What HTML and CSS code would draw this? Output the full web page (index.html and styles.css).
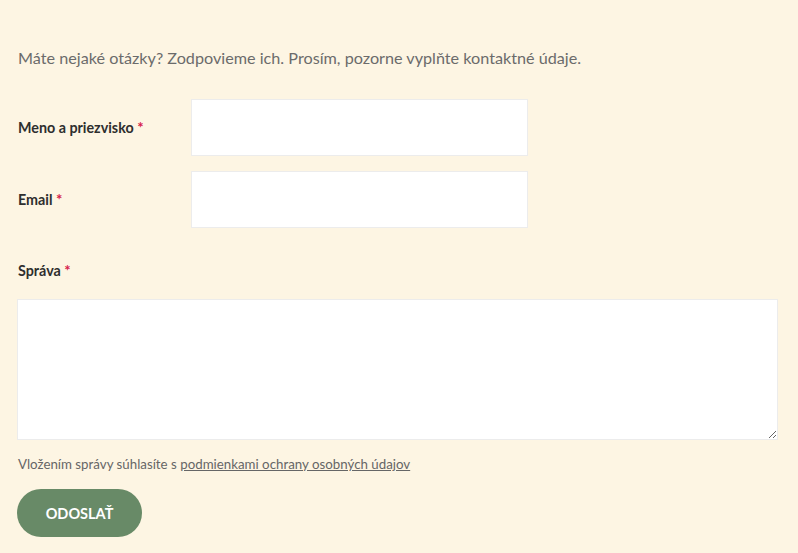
FILE: index.html
```html
<!DOCTYPE html>
<html lang="sk">
<head>
  <meta charset="UTF-8">
  <meta name="viewport" content="width=device-width, initial-scale=1.0">
  <title>Kontakt</title>
  <link rel="stylesheet" href="styles.css">
</head>
<body>
  <form class="contact">
    <p class="intro">Máte nejaké otázky? Zodpovieme ich. Prosím, pozorne vyplňte kontaktné údaje.</p>
    <div class="row">
      <label for="name">Meno a priezvisko <span class="req">*</span></label>
      <input type="text" id="name">
    </div>
    <div class="row">
      <label for="email">Email <span class="req">*</span></label>
      <input type="email" id="email">
    </div>
    <div class="block">
      <label for="msg">Správa <span class="req">*</span></label>
      <textarea id="msg"></textarea>
    </div>
    <p class="consent">Vložením správy súhlasíte s <a href="#">podmienkami ochrany osobných údajov</a></p>
    <button type="submit">ODOSLAŤ</button>
  </form>
</body>
</html>
```

FILE: styles.css
```css
body {
  margin: 0;
  background: #fdf5e3;
  font-family: Lato, sans-serif;
  color: #2b2b2b;
}
.contact {
  padding: 46px 20px 0 17px;
}
.intro {
  margin: 0 0 29px 1px;
  font-size: 16.2px;
  line-height: 24px;
  color: #6b6b6b;
}
.row {
  display: flex;
  align-items: center;
  margin-bottom: 15px;
}
.row label {
  width: 173px;
  padding-left: 1px;
}
label {
  font-size: 14.3px;
  line-height: 20px;
  font-weight: bold;
  color: #2e2e2e;
}
.req {
  color: #d6204a;
  font-size: 15px;
}
input {
  width: 337px;
  height: 57px;
  box-sizing: border-box;
  border: 1px solid #ececec;
  background: #fff;
}
.block label {
  display: block;
  margin: 32px 0 18px 1px;
}
textarea {
  display: block;
  width: 761px;
  height: 141px;
  box-sizing: border-box;
  border: 1px solid #ececec;
  background: #fff;
}
.consent {
  margin: 14px 0 15px 1px;
  font-size: 13.3px;
  line-height: 20px;
  color: #666;
}
.consent a {
  color: #666;
}
button {
  width: 125px;
  height: 48px;
  border: none;
  border-radius: 24px;
  background: #688a67;
  color: #fff;
  font-family: inherit;
  font-size: 14.5px;
  font-weight: bold;
  cursor: pointer;
}
```
